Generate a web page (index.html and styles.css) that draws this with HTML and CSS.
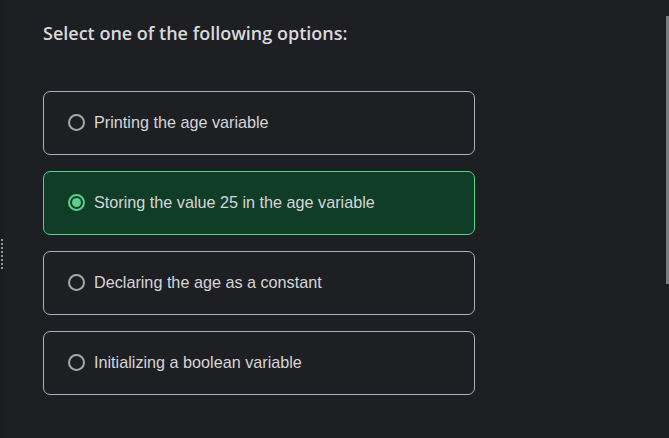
FILE: index.html
```html
<!DOCTYPE html>
<html>
<head>
<meta charset="utf-8">
<link rel="stylesheet" href="styles.css">
</head>
<body>
<div class="edge"><span class="dots"></span></div>
<main class="panel">
  <h2 class="title">Select one of the following options:</h2>
  <div class="options">
    <label class="option"><span class="radio"></span><span class="label">Printing the age variable</span></label>
    <label class="option selected"><span class="radio"></span><span class="label">Storing the value 25 in the age variable</span></label>
    <label class="option"><span class="radio"></span><span class="label">Declaring the age as a constant</span></label>
    <label class="option"><span class="radio"></span><span class="label">Initializing a boolean variable</span></label>
  </div>
</main>
<div class="scrollbar"><span class="thumb"></span></div>
</body>
</html>
```
FILE: styles.css
```css
html, body {
  margin: 0;
  padding: 0;
  width: 669px;
  height: 438px;
  overflow: hidden;
  background: #1e1f23;
}
body {
  display: flex;
}
.edge {
  width: 4px;
  background: #1b1c20;
  display: flex;
  flex-direction: column;
  justify-content: flex-start;
}
.dots {
  margin-top: 239px;
  margin-left: 1px;
  width: 2px;
  height: 30px;
  background: repeating-linear-gradient(to bottom, #9a9a9a 0 2px, transparent 2px 4px);
}
.panel {
  flex: 1;
  padding: 21px 0 0 39px;
}
.title {
  margin: 0 0 46px 0;
  font-family: "Open Sans", sans-serif;
  font-weight: 600;
  font-size: 18px;
  line-height: 24px;
  color: #d9d9dc;
}
.options {
  display: flex;
  flex-direction: column;
  gap: 16px;
  width: 432px;
}
.option {
  box-sizing: border-box;
  height: 64px;
  border: 1px solid #aab2b8;
  border-radius: 7px;
  display: flex;
  align-items: center;
  padding-left: 24px;
  padding-bottom: 2px;
  gap: 9px;
  font-family: "Liberation Sans", Arial, sans-serif;
  font-size: 16.2px;
  color: #d6d6d8;
}
.option.selected {
  background: #0f3d27;
  border-color: #4fd58a;
}
.radio {
  box-sizing: border-box;
  width: 17px;
  height: 17px;
  border: 2px solid #a9a9ab;
  border-radius: 50%;
  display: flex;
  align-items: center;
  justify-content: center;
}
.selected .radio {
  border-color: #5ccf8d;
}
.selected .radio::after {
  content: "";
  width: 9px;
  height: 9px;
  border-radius: 50%;
  background: #5ccf8d;
}
.scrollbar {
  width: 3px;
  padding-top: 16px;
}
.thumb {
  display: block;
  width: 3px;
  height: 268px;
  background: #7c7c7f;
}
```
